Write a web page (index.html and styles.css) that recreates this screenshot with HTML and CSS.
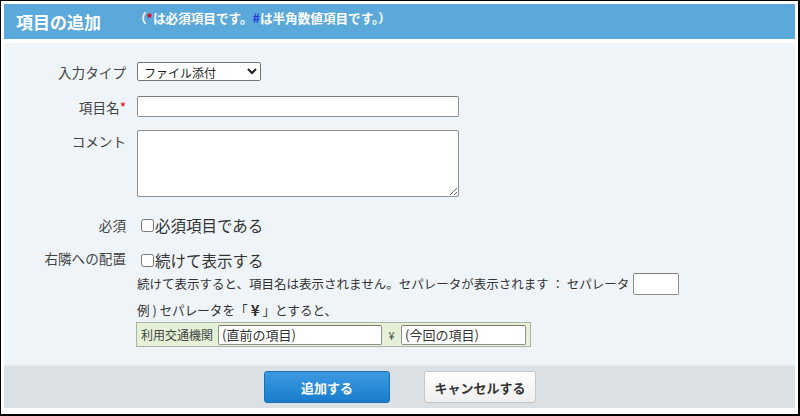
FILE: index.html
```html
<!DOCTYPE html>
<html lang="ja">
<head>
<meta charset="utf-8">
<title>項目の追加</title>
<link rel="stylesheet" href="styles.css">
</head>
<body>
<div class="frame">
  <div class="header">
    <h1 class="title">項目の追加</h1>
    <span class="note">（<span class="req">*</span>は必須項目です。<span class="num">#</span>は半角数値項目です。）</span>
  </div>
  <div class="panel">
    <div class="row row-type">
      <div class="label">入力タイプ</div>
      <select class="sel"><option>ファイル添付</option></select>
    </div>
    <div class="row row-name">
      <div class="label">項目名<span class="star">*</span></div>
      <input class="txt wide" type="text">
    </div>
    <div class="row row-comment">
      <div class="label label-top">コメント</div>
      <textarea class="area"></textarea>
    </div>
    <div class="row row-check">
      <div class="label">必須</div>
      <label class="chk"><input type="checkbox" class="box">必須項目である</label>
    </div>
    <div class="row row-check2">
      <div class="label">右隣への配置</div>
      <label class="chk"><input type="checkbox" class="box">続けて表示する</label>
    </div>
    <div class="sub">
      <div class="desc">続けて表示すると、項目名は表示されません。セパレータが表示されます ： セパレータ <input class="txt sep" type="text"></div>
      <div class="example">例 ) セパレータを「 <b class="yen">¥</b> 」とすると、</div>
      <div class="sample">
        <span class="sample-label">利用交通機関</span>
        <input class="txt s1" type="text" value="(直前の項目)">
        <span class="sample-yen">¥</span>
        <input class="txt s2" type="text" value="(今回の項目)">
      </div>
    </div>
  </div>
  <div class="footer">
    <button class="btn primary">追加する</button>
    <button class="btn secondary">キャンセルする</button>
  </div>
</div>
</body>
</html>
```
FILE: styles.css
```css
html, body {
  margin: 0;
  padding: 0;
  background: #fff;
}
body {
  font-family: "Noto Sans CJK JP", "Noto Sans", sans-serif;
  color: #333;
}
.frame {
  width: 800px;
  height: 416px;
  box-sizing: border-box;
  border-style: solid;
  border-color: #000;
  border-width: 1px 2px 2px 1px;
  padding: 3px 3px 6px 3px;
  background: #fff;
}
.header {
  height: 35px;
  background: #5ba9da;
  display: flex;
  align-items: center;
  padding-left: 12px;
  margin-bottom: 4px;
  color: #fff;
}
.title {
  margin: 0;
  font-size: 17px;
  font-weight: bold;
  line-height: 20px;
}
.note {
  margin-left: 33px;
  font-size: 12.6px;
  font-weight: bold;
  line-height: 14px;
  margin-bottom: 8px;
}
.req { color: #e60012; }
.num { color: #1f3fd8; }

.panel {
  height: 321px;
  box-sizing: border-box;
  background: #eff4f8;
  padding-top: 19px;
}
.row {
  display: flex;
  align-items: center;
}
.label {
  width: 122px;
  margin-right: 11px;
  text-align: right;
  font-size: 13.6px;
  line-height: 16px;
  color: #444;
  flex: none;
}
.label-top { padding-top: 3px; }
.star { color: #e60012; }

.row-type { height: 19px; margin-bottom: 15px; }
.row-name { height: 21px; margin-bottom: 13px; }
.row-comment { align-items: flex-start; margin-bottom: 18px; }
.row-check { height: 20px; margin-bottom: 15px; }
.row-check2 { height: 20px; }
.row-check2 .label { margin-top: -4px; }

.sel {
  width: 124px;
  height: 19px;
  font-family: inherit;
  font-size: 12px;
  color: #222;
  border: 1px solid #767676;
  border-radius: 2px;
  background: #fff;
  padding: 0 0 0 2px;
  margin: 0;
}
.txt {
  box-sizing: border-box;
  border: 1px solid #8f8f8f;
  border-top-color: #7a7a7a;
  border-radius: 2px;
  background: #fff;
  margin: 0;
  padding: 0 3px;
  font-family: inherit;
  font-size: 13px;
  color: #333;
}
.wide { width: 322px; height: 21px; }
.area {
  box-sizing: border-box;
  width: 322px;
  height: 67px;
  border: 1px solid #8f8f8f;
  border-radius: 2px;
  background: #fff;
  margin: 0;
  font-family: inherit;
}
.chk {
  display: flex;
  align-items: center;
  font-size: 15.5px;
  line-height: 20px;
  color: #333;
}
.box {
  width: 13px;
  height: 13px;
  margin: 0 1px 0 4px;
}
.sub {
  margin-left: 133px;
}
.desc {
  height: 28px;
  display: flex;
  align-items: center;
  font-size: 12.5px;
  line-height: 16px;
  color: #333;
  white-space: nowrap;
}
.sep {
  width: 46px;
  height: 22px;
  margin-left: 4px;
}
.example {
  height: 24px;
  display: flex;
  align-items: center;
  font-size: 12.6px;
  line-height: 16px;
  color: #333;
}
.yen {
  font-size: 15px;
  margin: 0 3px;
}
.sample {
  width: 395px;
  height: 25px;
  box-sizing: border-box;
  margin-left: -1px;
  display: flex;
  align-items: center;
  background: #e5f1d6;
  border: 1px solid #aab4a2;
  padding: 0 4px;
}
.sample-label {
  font-size: 12px;
  line-height: 14px;
  color: #444;
  width: 77px;
  flex: none;
}
.s1 { width: 165px; height: 20px; }
.sample-yen {
  font-size: 11px;
  width: 19px;
  text-align: center;
  color: #444;
}
.s2 { width: 125px; height: 20px; }

.footer {
  height: 44px;
  box-sizing: border-box;
  background: #dbe0e4;
  border-top: 2px solid #e9edf0;
  display: flex;
  justify-content: center;
  align-items: center;
  gap: 34px;
  padding-left: 1px;
}
.btn {
  height: 32px;
  border-radius: 3px;
  font-family: inherit;
  font-size: 13px;
  font-weight: bold;
  cursor: pointer;
  margin: 0;
  padding: 0;
}
.primary {
  width: 126px;
  color: #fff;
  background: linear-gradient(#3b9ae0, #1a7dcd);
  border: 1px solid #1c6eb0;
}
.secondary {
  width: 112px;
  color: #333;
  background: linear-gradient(#ffffff, #efefef);
  border: 1px solid #c5c8cb;
}
```
